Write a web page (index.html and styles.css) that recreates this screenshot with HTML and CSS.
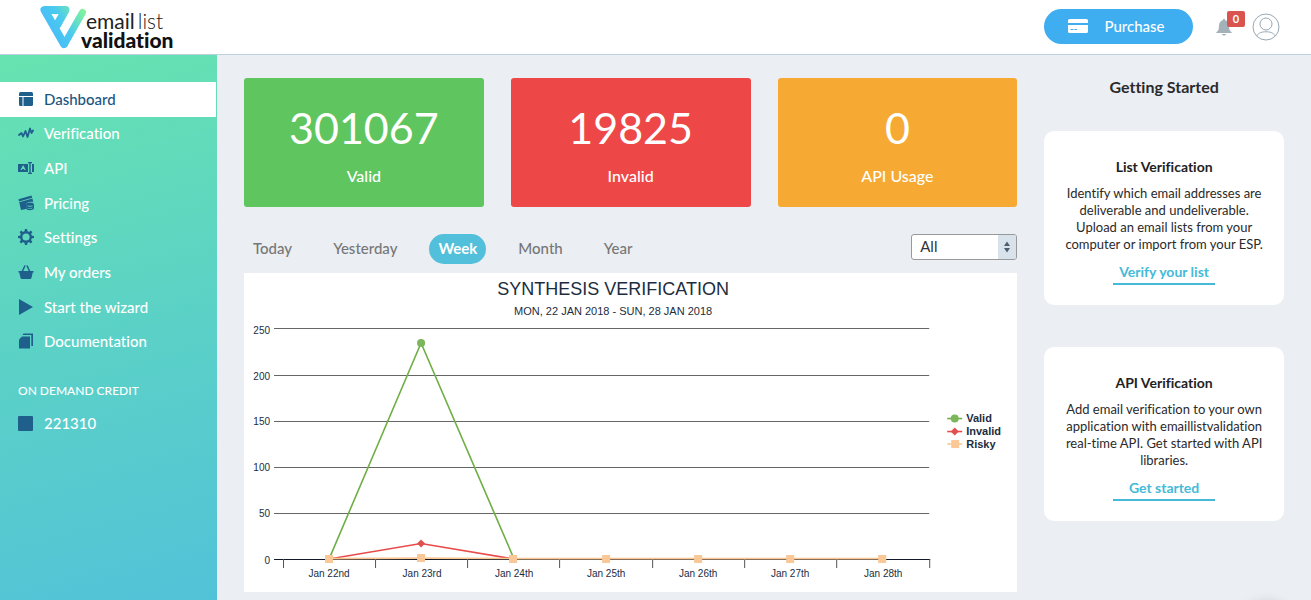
FILE: index.html
```
<!DOCTYPE html>
<html lang="en">
<head>
<meta charset="utf-8">
<meta name="viewport" content="width=device-width, initial-scale=1">
<title>Email List Validation</title>
<link rel="stylesheet" href="styles.css">
</head>
<body>
<header class="topbar">
  <a class="logo" href="#" aria-label="email list validation">
    <svg width="150" height="50" viewBox="36 0 150 50">
      <defs>
        <linearGradient id="mark" gradientUnits="userSpaceOnUse" x1="46" y1="34" x2="84" y2="10">
          <stop offset="0" stop-color="#48b8fb"/>
          <stop offset="0.5" stop-color="#4acbee"/>
          <stop offset="1" stop-color="#7ff39c"/>
        </linearGradient>
      </defs>
      <g fill="none" stroke="url(#mark)" stroke-linejoin="round" stroke-linecap="round">
        <path stroke-width="8" d="M64 42L44.500 8H65.500L56.500 24"/>
        <path stroke-width="7" d="M64.500 42L82.500 10.500"/>
      </g>
      <text class="logo-line" x="86" y="27">email<tspan class="logo-thin" dx="3">list</tspan></text>
      <text class="logo-bold" x="81" y="46">validation</text>
    </svg>
  </a>
  <div class="actions">
    <button class="purchase" type="button">
      <svg width="20" height="14" viewBox="0 0 20 14" fill="#fff">
        <path d="M1.500 0h17A1.500 1.500 0 0 1 20 1.500V4H0V1.500A1.500 1.500 0 0 1 1.500 0z"/>
        <path fill-rule="evenodd" d="M0 6h20v6.500a1.500 1.500 0 0 1-1.500 1.500h-17A1.500 1.500 0 0 1 0 12.500zM2.500 10v1h3v-1zM6.500 10v1h2.500v-1z"/>
      </svg>
      Purchase
    </button>
    <button class="bell" type="button" aria-label="Notifications">
      <svg width="16" height="17" viewBox="0 0 16 17" fill="#a3b1b9">
        <path d="M8 0c.8 0 1.200.5 1.200 1.300C12 2 13 4.500 13 7c0 3.500.8 5 2.700 6.200V14H.3v-.8C2.200 12 3 10.500 3 7c0-2.500 1-5 3.800-5.700C6.800.5 7.200 0 8 0z"/>
        <path d="M6 15h4c-.2 1-1 1.600-2 1.600S6.200 16 6 15z"/>
      </svg>
      <span class="badge">0</span>
    </button>
    <button class="avatar" type="button" aria-label="Account">
      <svg width="28" height="28" viewBox="0 0 28 28" fill="none" stroke="#98a7b3">
        <circle cx="14" cy="14" r="13"/>
        <circle cx="14" cy="11" r="6"/>
        <path d="M4.500 23C7 19.500 10 18.800 14 18.800S21 19.500 23.500 23"/>
      </svg>
    </button>
  </div>
</header>
<div class="layout">
  <nav class="sidebar">
    <ul class="menu">
      <li><a class="item active" href="#"><svg class="icon" viewBox="0 0 16 16"><path d="M1 2.500A1.500 1.500 0 0 1 2.500 1h11A1.500 1.500 0 0 1 15 2.500V5H1zM1 6h3.500v9h-2A1.500 1.500 0 0 1 1 13.500zM5.500 6H15v7.500a1.500 1.500 0 0 1-1.500 1.500h-8z"/></svg>Dashboard</a></li>
      <li><a class="item" href="#"><svg class="icon" viewBox="0 0 16 16"><path fill="none" stroke="#1f5f8b" stroke-width="1.800" stroke-linejoin="round" stroke-linecap="round" d="M1 10l2.500-2 1.500 3.500L7.500 6l2 6L12 3.500 13.500 8 15 5.500"/></svg>Verification</a></li>
      <li><a class="item" href="#"><svg class="icon" viewBox="0 0 16 16"><path fill-rule="evenodd" d="M0 4h10v8H0zM4.800 5.500L2.500 10h1.300l.4-1h1.800l.5 1h1.300L5.500 5.500zM14 4h2v8h-2z"/><path d="M10 2h4v1.200h-1.300v9.600H14V14h-4v-1.200h1.300V3.200H10z"/></svg>API</a></li>
      <li><a class="item" href="#"><svg class="icon" viewBox="0 0 16 16"><path d="M.5 4.300L13.500.5l.7 2.300L1 6.500zM1.200 7.200l13.200-3.800.9 3.800c-3-1-7 0-7.300 2.300v4.500L3 15z"/><ellipse cx="12" cy="9.200" rx="3.800" ry="1.600"/><path fill="none" stroke="#1f5f8b" stroke-width="1.300" d="M8.500 11c.6 2 6.400 2 7 0M8.500 13c.6 2 6.400 2 7 0M8.800 9.500v4M15.400 9.500v4"/></svg>Pricing</a></li>
      <li><a class="item" href="#"><svg class="icon" viewBox="0 0 16 16"><circle cx="8" cy="8" r="4.800" fill="none" stroke="#1f5f8b" stroke-width="2.400"/><path d="M6.900 0h2.200l.5 3H6.400zM6.900 16h2.200l.5-3H6.400zM0 6.900v2.200l3 .5V6.400zM16 6.900v2.200l-3 .5V6.400zM1.600 3.200l1.600-1.600 2.400 1.800-2.200 2.200zM14.400 3.200l-1.600-1.600-2.400 1.800 2.200 2.200zM1.600 12.800l1.600 1.600 2.400-1.800-2.200-2.200zM14.400 12.800l-1.600 1.600-2.400-1.800 2.200-2.200z"/></svg>Settings</a></li>
      <li><a class="item" href="#"><svg class="icon" viewBox="0 0 16 16"><path d="M.5 7h15v1.500h-.8l-1.200 5.300a1.500 1.500 0 0 1-1.400 1.200H4a1.500 1.500 0 0 1-1.500-1.200L1.300 8.500H.5z"/><path fill="none" stroke="#1f5f8b" stroke-width="1.500" stroke-linecap="round" d="M4.500 7L6.800 2M11.500 7L9.200 2"/></svg>My orders</a></li>
      <li><a class="item" href="#"><svg class="icon" viewBox="0 0 16 16"><path d="M1 0l14 8-14 8z"/></svg>Start the wizard</a></li>
      <li><a class="item" href="#"><svg class="icon" viewBox="0 0 16 16"><path d="M4 3.500h8V15.500H1V6.500z"/><path d="M5.500.5H15V13h-1.700V2H4.500z"/></svg>Documentation</a></li>
    </ul>
    <h2 class="credit-title">ON DEMAND CREDIT</h2>
    <p class="credit"><span class="swatch"></span>221310</p>
  </nav>
  <main class="content">
    <section class="primary">
      <div class="stats">
        <article class="stat valid"><strong class="stat-value">301067</strong><span>Valid</span></article>
        <article class="stat invalid"><strong class="stat-value">19825</strong><span>Invalid</span></article>
        <article class="stat usage"><strong class="stat-value">0</strong><span>API Usage</span></article>
      </div>
      <div class="filters">
        <div class="ranges">
          <button class="range" type="button">Today</button>
          <button class="range" type="button">Yesterday</button>
          <button class="range selected" type="button">Week</button>
          <button class="range" type="button">Month</button>
          <button class="range" type="button">Year</button>
        </div>
        <div class="picker">
          <select class="select" aria-label="Source"><option>All</option></select>
          <svg class="arrows" width="18" height="24" viewBox="0 0 18 24"><path fill="#d8e2ea" d="M0 0h16a2 2 0 0 1 2 2v20a2 2 0 0 1-2 2H0z"/><path fill="#4d5f6e" d="M6 11L9 6.500l3 4.500zM6 13h6L9 17.500z"/></svg>
        </div>
      </div>
      <div class="chart">
        <svg class="plot" viewBox="244 273 773 319" role="img" aria-label="Synthesis verification">
          <text class="chart-title" x="613" y="295">SYNTHESIS VERIFICATION</text>
          <text class="chart-sub" x="613" y="315">MON, 22 JAN 2018 - SUN, 28 JAN 2018</text>
          <path class="grid" d="M274 328.500H929M274 375.500H929M274 421.500H929M274 467.500H929M274 513.500H929"/>
          <path class="axis" d="M274 559.500H930"/>
          <path class="ticks" d="M283.500 559v9M375.500 559v9M467.500 559v9M559.500 559v9M652.500 559v9M744.500 559v9M836.500 559v9M929.500 559v9"/>
          <g class="ylab">
            <text x="270" y="334">250</text><text x="270" y="380">200</text><text x="270" y="425">150</text><text x="270" y="471">100</text><text x="270" y="517">50</text><text x="270" y="564">0</text>
          </g>
          <g class="xlab">
            <text x="329" y="577">Jan 22nd</text><text x="422" y="577">Jan 23rd</text><text x="514" y="577">Jan 24th</text><text x="606" y="577">Jan 25th</text><text x="698" y="577">Jan 26th</text><text x="790" y="577">Jan 27th</text><text x="883" y="577">Jan 28th</text>
          </g>
          <g fill="none" stroke-width="1.600">
            <path stroke="#6fae45" d="M329 559L421 343L514 559"/>
            <path stroke="#e84c4a" d="M329 559L421 543.500L514 559"/>
            <path stroke="#fac793" d="M329 558.500L421 558L514 558.500H882"/>
          </g>
          <circle cx="421" cy="343" r="4" fill="#7cb65a"/>
          <path fill="#e0504e" d="M421 539.500l4 4-4 4-4-4z"/>
          <path fill="#f9c896" d="M325 555h8v8h-8zM417 554h8v8h-8zM509 555h8v8h-8zM602 555h8v8h-8zM694 555h8v8h-8zM786 555h8v8h-8zM878 555h8v8h-8z"/>
          <g stroke-width="1.600">
            <path stroke="#6fae45" d="M947 418.500h15"/><path stroke="#e84c4a" d="M947 431.500h15"/><path stroke="#fac793" d="M947 444h15"/>
          </g>
          <circle cx="954.500" cy="418.500" r="4" fill="#7cb65a"/>
          <path fill="#e0504e" d="M954.500 427.500l4 4-4 4-4-4z"/>
          <path fill="#f9c896" d="M951 440h8v8h-8z"/>
          <g class="legend">
            <text x="966" y="422">Valid</text><text x="966" y="435">Invalid</text><text x="966" y="448">Risky</text>
          </g>
        </svg>
      </div>
    </section>
    <aside class="guide">
      <h2 class="guide-title">Getting Started</h2>
      <article class="card">
        <h3 class="card-title">List Verification</h3>
        <p class="card-text">Identify which email addresses are deliverable and undeliverable. Upload an email lists from your computer or import from your ESP.</p>
        <a class="card-link" href="#">Verify your list</a>
      </article>
      <article class="card">
        <h3 class="card-title">API Verification</h3>
        <p class="card-text">Add email verification to your own application with emaillistvalidation real-time API. Get started with API libraries.</p>
        <a class="card-link" href="#">Get started</a>
      </article>
    </aside>
  </main>
</div>
<div class="launcher"></div>
</body>
</html>
```
FILE: styles.css
```
* { box-sizing: border-box; }
body {
  margin: 0;
  min-height: 100vh;
  display: flex;
  flex-direction: column;
  background: #ebeef3;
  color: #2a2a2a;
  font-family: Lato, "Open Sans", sans-serif;
  font-size: 15px;
  font-variant-ligatures: none;
}
button, select { font: inherit; font-variant-ligatures: none; }
button { border: 0; background: none; padding: 0; cursor: pointer; }
h2, h3, p, ul { margin: 0; padding: 0; }
a { text-decoration: none; color: inherit; }
svg { display: block; }

.topbar {
  display: flex;
  justify-content: space-between;
  align-items: center;
  height: 55px;
  padding: 0 31px 1px 36px;
  background: #fff;
  border-bottom: 1px solid #bdd0dd;
}
.logo-line { font-size: 21px; fill: #222; }
.logo-thin { font-weight: 300; }
.logo-bold { font-size: 21px; font-weight: 900; fill: #111; }
.actions { display: flex; align-items: center; gap: 23px; }
.purchase {
  display: flex;
  align-items: center;
  justify-content: center;
  gap: 16px;
  width: 149px;
  height: 35px;
  padding: 0 4px 2px 0;
  border-radius: 18px;
  background: #3eaef1;
  color: #fff;
  font-size: 15px;
  font-weight: 500;
}
.bell { position: relative; padding-top: 2px; }
.badge {
  position: absolute;
  left: 11px;
  top: -6px;
  width: 18px;
  height: 16px;
  border-radius: 2px;
  background: #d9534f;
  color: #fff;
  font-size: 11px;
  font-weight: 700;
  line-height: 16px;
}
.avatar { margin-left: -3px; }

.layout { display: flex; flex: 1; }
.sidebar {
  flex: none;
  width: 217px;
  padding-top: 27px;
  background: linear-gradient(165deg, #67e3b0 0%, #5ad0c8 55%, #52c2d8 100%);
  color: #fff;
  font-weight: 500;
}
.menu { display: grid; grid-auto-rows: 1fr; height: 277px; list-style: none; }
.item {
  display: flex;
  align-items: center;
  gap: 10px;
  height: 100%;
  margin-right: 1px;
  padding: 0 0 1px 18px;
}
.item.active { background: #fff; color: #1b5580; }
.icon { width: 16px; height: 16px; fill: #1f5f8b; }
.credit-title { padding: 24px 18px 0; font-size: 12px; line-height: 16px; font-weight: 500; }
.credit { display: flex; align-items: center; gap: 11px; padding: 14px 18px; line-height: 20px; }
.swatch { width: 15px; height: 15px; border-radius: 1px; background: #1f5f8b; }

.content {
  flex: 1;
  display: grid;
  grid-template-columns: repeat(4, minmax(0, 1fr));
  align-items: start;
  column-gap: 27px;
  padding: 23px 27px 8px;
}
.primary { grid-column: span 3; }
.stats { display: grid; grid-template-columns: repeat(3, 1fr); gap: 27px; }
.stat {
  display: flex;
  flex-direction: column;
  align-items: center;
  padding: 23px 0 21px;
  border-radius: 3px;
  color: #fff;
  font-size: 16px;
  line-height: 21px;
  font-weight: 500;
}
.stat-value { margin-bottom: 11px; font-size: 43px; line-height: 53px; font-weight: 400; }
.valid { background: #5fc55e; }
.invalid { background: #ee4748; }
.usage { background: #f6aa33; }

.filters { display: flex; justify-content: space-between; margin: 27px 0 9px; }
.ranges { display: flex; gap: 23px; }
.range {
  height: 30px;
  padding: 0 9px 2px;
  border-radius: 15px;
  color: #777;
  font-size: 15px;
  font-weight: 500;
}
.range.selected { background: #52c0da; color: #fff; font-weight: 700; }
.picker { position: relative; width: 106px; height: 26px; }
.select {
  appearance: none;
  width: 100%;
  height: 26px;
  padding: 0 22px 2px 8px;
  border: 1px solid #999;
  border-radius: 3px;
  background: #fff;
  color: #333;
  font-size: 15px;
}
.arrows { position: absolute; right: 1px; top: 1px; pointer-events: none; }

.chart { background: #fff; }
.plot { width: 100%; height: auto; font-family: "Liberation Sans", Arial, sans-serif; fill: #1c2d40; }
.chart-title { font-size: 18px; text-anchor: middle; }
.chart-sub { font-size: 11px; text-anchor: middle; }
.grid { stroke: #666; }
.axis { stroke: #111827; }
.ticks { stroke: #555; }
.ylab { font-size: 10px; text-anchor: end; }
.xlab { font-size: 10px; text-anchor: middle; }
.legend { font-size: 11px; font-weight: 700; }

.guide { text-align: center; }
.guide-title { margin-bottom: 36px; font-size: 16px; line-height: 17px; font-weight: 700; }
.card { margin-bottom: 42px; padding: 26px 20px 20px; border-radius: 10px; background: #fff; }
.card-title { margin-bottom: 8px; font-size: 14px; line-height: 20px; font-weight: 700; color: #222; }
.card-text { margin-bottom: 8px; font-size: 13px; line-height: 17px; }
.card-link {
  display: inline-block;
  min-width: 102px;
  border-bottom: 2px solid #45bad8;
  color: #45bad8;
  font-weight: 700;
  font-size: 14px;
  line-height: 22px;
}
.launcher {
  position: fixed;
  right: 18px;
  bottom: -56px;
  width: 52px;
  height: 52px;
  border-radius: 50%;
  box-shadow: 0 0 14px rgba(0, 0, 0, .2);
}
```
